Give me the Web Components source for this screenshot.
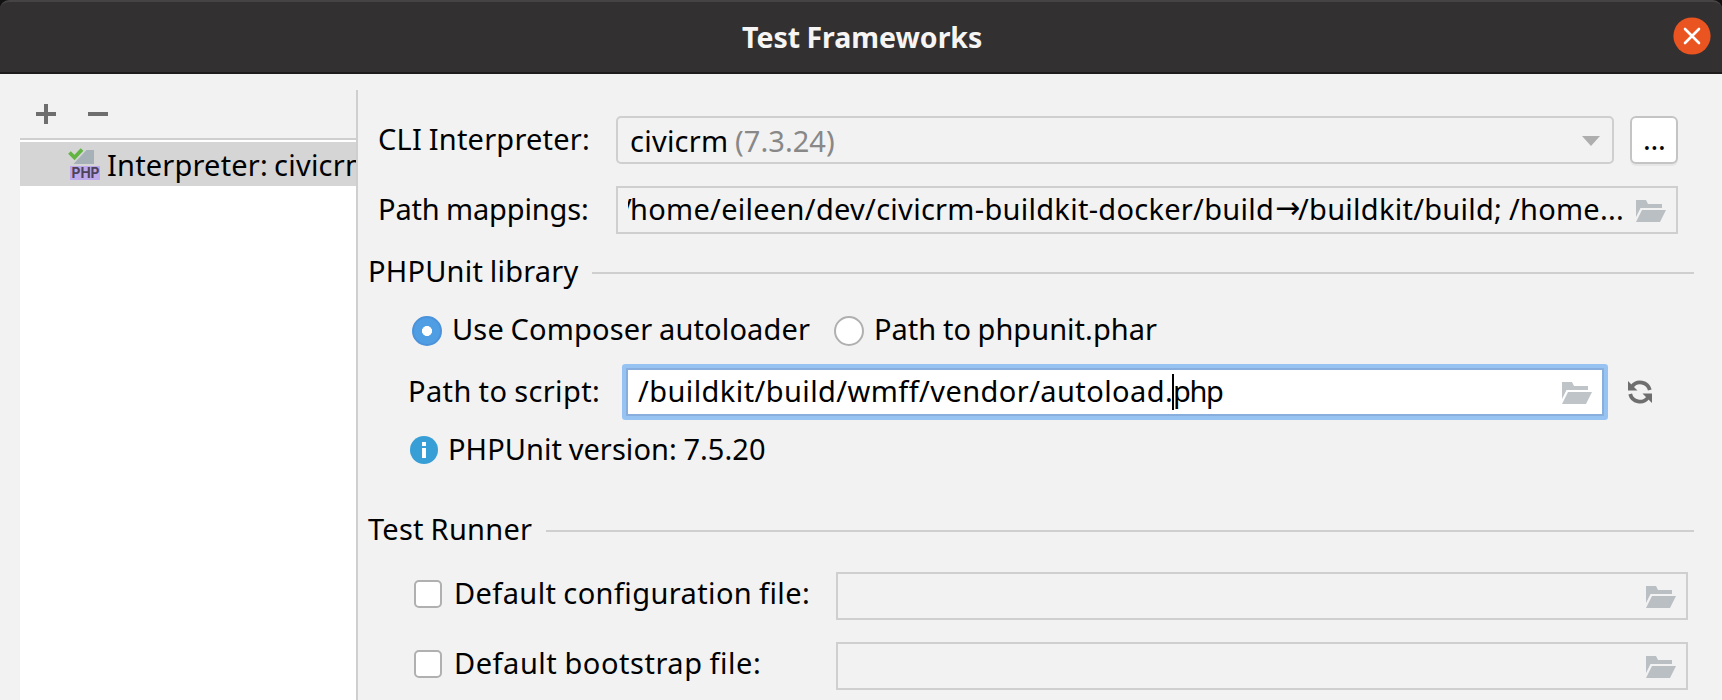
<!DOCTYPE html>
<html lang="en">
<head>
<meta charset="utf-8">
<title>Test Frameworks</title>
<style>
html,body{margin:0;height:100%;overflow:hidden}
body{font-family:"Noto Sans","Open Sans",sans-serif;font-size:29px;color:#000;background:#f2f2f2}
</style>
</head>
<body>
<settings-dialog></settings-dialog>
<script>
function define(name, html, init) {
  const tpl = document.createElement('template');
  tpl.innerHTML = html;
  customElements.define(name, class extends HTMLElement {
    connectedCallback() {
      if (this.shadowRoot) return;
      this.attachShadow({mode: 'open'}).append(tpl.content.cloneNode(true));
      if (init) init.call(this, this.shadowRoot);
    }
  });
}

// A single line of text whose visible glyphs span exactly the given width.
const ctx = document.createElement('canvas').getContext('2d');
define('fit-text', `<style>
:host{display:block;flex:none;height:40px;line-height:40px;white-space:pre}
span{display:block;width:0}
</style><span></span>`, function (root) {
  const text = this.getAttribute('text'), w = +this.getAttribute('w');
  const span = root.querySelector('span');
  const cs = getComputedStyle(this);
  ctx.font = cs.fontWeight + ' ' + cs.fontSize + ' ' + cs.fontFamily;
  const m = ctx.measureText(text);
  const ink = m.actualBoundingBoxRight + m.actualBoundingBoxLeft;
  const spaces = text.split(' ').length - 1;
  span.textContent = text;
  span.style.wordSpacing = '-1px';
  if (text.length > 1) span.style.letterSpacing = ((w - ink + spaces) / (text.length - 1)).toFixed(3) + 'px';
  span.style.marginLeft = m.actualBoundingBoxLeft + 'px';
  this.style.width = w + 'px';
});

define('folder-icon', `<style>:host{display:block;flex:none;width:30px;height:22px}svg{display:block}</style>
<svg width="30" height="22" viewBox="0 0 30 22" fill="#b9bfc3"><path d="M0 0h10l2 4h14v4H4.500L0 17z"/><path d="M6 10h24l-6 12H0z"/></svg>`);

define('title-bar', `<style>
:host{display:block;background:#111}
.bar{box-sizing:border-box;height:74px;display:grid;grid-template-columns:742px 1fr 38px 11px;background:#333031;border-top:2px solid #464344;border-bottom:2px solid #1e1b1c;border-radius:9px 9px 0 0;color:#f6f5f4;font-weight:700;font-size:28.5px}
fit-text{grid-column:2;margin-top:15px}
svg{grid-column:3;margin-top:15px}
</style><div class="bar"><fit-text text="Test Frameworks" w="240"></fit-text>
<svg width="38" height="38" viewBox="0 0 38 38"><circle cx="19" cy="19" r="18.600" fill="#e95420"/><path d="M12 12l14 14M26 12L12 26" stroke="#fff" stroke-width="2.600" stroke-linecap="round"/></svg></div>`);

define('side-list', `<style>
:host{display:flex;flex-direction:column;width:336px;margin-left:20px;flex:none;overflow:hidden}
.tools{height:64px;border-bottom:2px solid #cfcfcf;flex:none}
.tools svg{display:block}
.list{flex:1;background:#fff;padding-top:2px}
.item{height:44px;background:#d5d5d5;display:flex;overflow:hidden}
.item svg{flex:none;margin:4px 7px 0 48px}
.item fit-text{margin-top:3px}
</style>
<div class="tools"><svg width="100" height="64" fill="#6e6e6e"><path d="M24 30h4v8h8v4h-8v8h-4v-8h-8v-4h8zM68 38h20v4H68z"/></svg></div>
<div class="list"><div class="item">
<svg width="33" height="36" viewBox="0 0 33 36"><path d="M26 4v14H5.500L18.500 4z" fill="#a5b0b7"/><path d="M1.500 6.500l5 5L14 3.500" fill="none" stroke="#62b543" stroke-width="3.800"/><path d="M2 20h30v14H2z" fill="#bea9ec"/><text x="3.500" y="32" font-family="Inter,sans-serif" font-weight="700" font-size="14" textLength="28" lengthAdjust="spacingAndGlyphs" fill="#4e4359">PHP</text></svg>
<fit-text text="Interpreter:" w="158"></fit-text><fit-text text="civicrm" w="95" style="margin-left:9px"></fit-text></div></div>`);

// Outlined box with a leading text and an optional folder button.
define('text-field', `<style>
:host{box-sizing:border-box;display:flex;height:48px;border:2px solid #cfcfcf;padding-right:10px;flex:none}
:host([focused]){background:#fff;border-color:#87aedc;box-shadow:0 0 0 4px #97c3f3;border-radius:1px}
:host([combo]){border-radius:5px}
.content{flex:1;display:flex;overflow:hidden;margin-left:10px}
folder-icon{margin-top:12px}
svg{margin:18px 2px 0 0;flex:none}
:host([focused]) folder-icon{opacity:.92}
:host([combo]) folder-icon,:host(:not([combo])) svg{display:none}
</style><div class="content"><slot></slot></div><folder-icon></folder-icon>
<svg width="18" height="10"><path d="M0 0h18L9 10z" fill="#aeaeae"/></svg>`);

define('section-title', `<style>
:host{display:flex;height:40px;margin-right:28px}
i{flex:1;height:2px;background:#cfcfcf;margin:21px 0 0 14px}
</style><slot></slot><i></i>`);

define('radio-dot', `<style>
:host{box-sizing:border-box;display:block;width:30px;height:30px;border-radius:50%;border:2px solid #b0b0b0;background:#fff;margin-top:7px;flex:none}
:host([checked]){border:2px solid #4b92db;background:radial-gradient(circle,#fff 4.700px,#4f9ee3 5.300px)}
</style>`);

define('check-box', `<style>
:host{box-sizing:border-box;display:block;width:28px;height:28px;border-radius:5px;border:2px solid #b0b0b0;background:#fff;margin-top:8px;flex:none}
</style>`);

define('settings-form', `<style>
:host{display:block;flex:1;border-left:2px solid #cfcfcf;padding-top:26px;margin-top:16px}
.row{display:flex}
.r48{height:48px}.r48>fit-text{margin-top:3px}
.btn{box-sizing:border-box;width:48px;height:48px;margin-left:16px;background:#fff;border:2px solid #c4c4c4;border-radius:6px;box-shadow:0 2px 0 #e6e6e6;padding:1px 0 0 13px}
.check>fit-text{margin:1px 0 0 14px}
.grey{color:#888}
.script{position:relative}
.caret{position:absolute;left:814px;top:10px;width:2px;height:36px;background:#000}
</style>
<div class="row r48" style="padding-left:21px"><fit-text text="CLI Interpreter:" w="209"></fit-text>
 <text-field combo style="width:998px;margin-left:28px"><fit-text text="civicrm" w="95" style="margin:3px 0 0 3px"></fit-text><fit-text class="grey" text="(7.3.24)" w="98" style="margin:3px 0 0 10px"></fit-text></text-field>
 <div class="btn"><fit-text text="..." w="19"></fit-text></div></div>
<div class="row r48" style="padding-left:22px;margin-top:22px"><fit-text text="Path mappings:" w="207"></fit-text>
 <text-field style="width:1062px;margin-left:29px"><fit-text text="/" w="10" style="margin:1px 0 0 -7px"></fit-text><fit-text text="home/eileen/dev/civicrm-buildkit-docker/build" w="640" style="margin:1px 0 0 1px"></fit-text><fit-text text="→" w="22" style="margin:0 0 0 4px;font-family:'DejaVu Sans',sans-serif;font-size:30px"></fit-text><fit-text text="/buildkit/build; /home..." w="324" style="margin:1px 0 0 0"></fit-text></text-field></div>
<section-title style="padding-left:12px;margin-top:17px"><fit-text text="PHPUnit library" w="208.5" style="margin-right:-.5px"></fit-text></section-title>
<div class="row" style="padding-left:54px;margin-top:18px"><radio-dot checked></radio-dot><fit-text text="Use Composer autoloader" w="356" style="margin-left:12px"></fit-text><radio-dot style="margin-left:24px"></radio-dot><fit-text text="Path to phpunit.phar" w="281" style="margin-left:12px"></fit-text></div>
<div class="row script" style="height:56px;padding-left:52px;margin-top:15px"><fit-text text="Path to script:" w="188" style="margin-top:7px"></fit-text>
 <text-field focused style="width:978px;margin:4px 0 0 28px"><fit-text text="/buildkit/build/wmff/vendor/autoload." w="533" style="margin:1px 0 0 0"></fit-text><fit-text text="php" w="48" style="margin:1px 0 0 4px"></fit-text></text-field>
 <svg width="24" height="24" viewBox="0 0 24 24" style="margin:16px 0 0 24px"><g fill="none" stroke="#6e6e6e" stroke-width="3.800"><path d="M4 6.500A10 10 0 0 1 21.800 10"/><path d="M20 17.500A10 10 0 0 1 2.200 14"/></g><path d="M0 1v9.500h9.500zM24 23v-9.500h-9.500z" fill="#6e6e6e"/></svg>
 <div class="caret"></div></div>
<div class="row" style="padding-left:52px;margin-top:9px"><svg width="28" height="28" style="margin-top:7px"><circle cx="14" cy="14" r="14" fill="#389fd6"/><path d="M12 6h4v4h-4zM12 12h4v10h-4z" fill="#fff"/></svg><fit-text text="PHPUnit version: 7.5.20" w="315" style="margin-left:12px"></fit-text></div>
<section-title style="padding-left:10px;margin-top:40px"><fit-text text="Test Runner" w="164"></fit-text></section-title>
<div class="row check" style="padding-left:56px;margin-top:23px"><check-box></check-box><fit-text text="Default configuration file:" w="352"></fit-text><text-field style="width:852px;margin-left:28px"></text-field></div>
<div class="row check" style="padding-left:56px;margin-top:22px"><check-box></check-box><fit-text text="Default bootstrap file:" w="303"></fit-text><text-field style="width:852px;margin-left:77px"></text-field></div>`);

define('settings-dialog', `<style>
:host{display:flex;flex-direction:column;width:1722px;height:700px;overflow:hidden;background:#f2f2f2}
main{display:flex;flex:1;min-height:0}
</style><title-bar></title-bar><main><side-list></side-list><settings-form></settings-form></main>`);
</script>
</body>
</html>
